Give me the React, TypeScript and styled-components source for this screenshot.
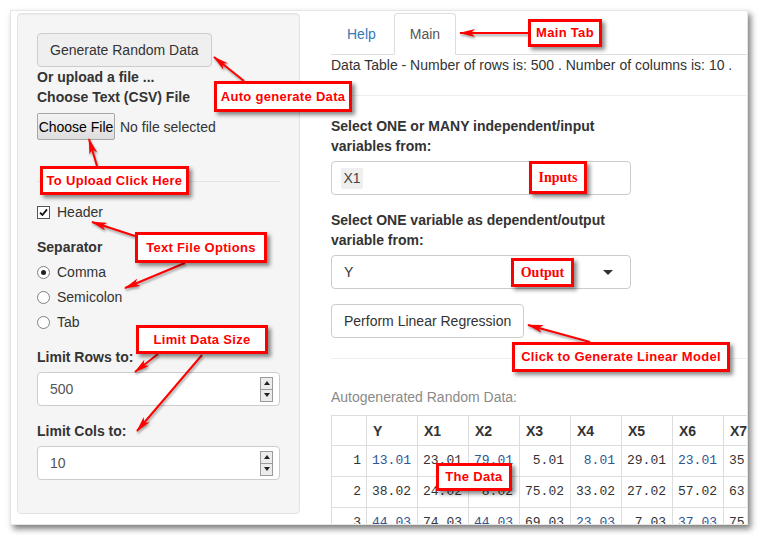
import React from "react";
import styled, { createGlobalStyle } from "styled-components";

const GlobalStyle = createGlobalStyle`
  * {
    box-sizing: border-box;
  }
  body {
    margin: 0;
    background: #ffffff;
    font-family: "Liberation Sans", Arial, Helvetica, sans-serif;
    font-size: 14px;
    line-height: 20px;
    color: #333333;
  }
`;

const Page = styled.div`
  position: relative;
  width: 759px;
  height: 535px;
  padding: 10px 0 0 10px;
  overflow: hidden;
`;

const Frame = styled.div`
  width: 738px;
  height: 515px;
  display: flex;
  background: #ffffff;
  border: 1px solid #e6e6e6;
  box-shadow: 3px 4px 6px rgba(0, 0, 0, 0.5);
  overflow: hidden;
`;

const Sidebar = styled.div`
  flex: none;
  padding: 2px 0 0 6px;
`;

const Well = styled.div`
  width: 283px;
  height: 501px;
  padding: 19px;
  background: #f5f5f5;
  border: 1px solid #e3e3e3;
  border-radius: 4px;
  box-shadow: inset 0 1px 1px rgba(0, 0, 0, 0.05);
`;

const Button = styled.button<{ $tone?: "grey" | "white" }>`
  display: block;
  height: 34px;
  padding: 6px 12px;
  font-family: inherit;
  font-size: 14px;
  line-height: 20px;
  color: #333333;
  background: ${(p) => (p.$tone === "white" ? "#ffffff" : "#efefef")};
  border: 1px solid #cccccc;
  border-radius: 4px;
  white-space: nowrap;
`;

const Label = styled.div<{ $mt?: number; $width?: number }>`
  margin-top: ${(p) => p.$mt ?? 0}px;
  max-width: ${(p) => (p.$width ? `${p.$width}px` : "none")};
  font-weight: bold;
  line-height: 20px;
`;

const FileRow = styled.div`
  display: flex;
  align-items: center;
  gap: 5px;
  height: 27px;
  margin-top: 6px;
`;

const FileButton = styled.button`
  width: 78px;
  height: 27px;
  padding: 0;
  font-family: inherit;
  font-size: 14px;
  color: #000000;
  background: linear-gradient(#f4f4f4, #dddddd);
  border: 1px solid #a6a6a6;
  border-radius: 2px;
  white-space: nowrap;
`;

const Rule = styled.hr<{ $mt: number; $tone?: string }>`
  height: 0;
  margin: ${(p) => p.$mt}px 0 0;
  border: 0;
  border-top: 1px solid ${(p) => p.$tone ?? "#e3e3e3"};
`;

const OptionRow = styled.div<{ $mt: number }>`
  display: flex;
  align-items: center;
  gap: 7px;
  height: 20px;
  margin-top: ${(p) => p.$mt}px;
`;

const CheckBox = styled.span`
  width: 13px;
  height: 13px;
  display: flex;
  align-items: center;
  justify-content: center;
  background: #ffffff;
  border: 1px solid #555555;
`;

const Radio = styled.span<{ $on?: boolean }>`
  width: 13px;
  height: 13px;
  display: flex;
  align-items: center;
  justify-content: center;
  background: #ffffff;
  border: 1px solid #808080;
  border-radius: 50%;

  &::after {
    content: "";
    width: 5px;
    height: 5px;
    border-radius: 50%;
    background: ${(p) => (p.$on ? "#222222" : "transparent")};
  }
`;

const NumberField = styled.div`
  height: 34px;
  margin-top: 5px;
  padding: 0 6px 0 12px;
  display: flex;
  align-items: center;
  justify-content: space-between;
  color: #555555;
  background: #ffffff;
  border: 1px solid #cccccc;
  border-radius: 4px;
`;

const Spinner = styled.div`
  display: flex;
  flex-direction: column;
  width: 13px;
`;

const Step = styled.span<{ $down?: boolean }>`
  height: 13px;
  display: flex;
  align-items: center;
  justify-content: center;
  background: #ececec;
  border: 1px solid #9a9a9a;
  margin-top: ${(p) => (p.$down ? "-1px" : "0")};

  &::after {
    content: "";
    border-left: 3px solid transparent;
    border-right: 3px solid transparent;
    ${(p) => (p.$down ? "border-top: 4px solid #222;" : "border-bottom: 4px solid #222;")}
  }
`;

const Main = styled.div`
  flex: 1;
  min-width: 0;
  margin-left: 31px;
  padding-top: 2px;
  overflow: hidden;
`;

const TabBar = styled.div`
  display: flex;
  border-bottom: 1px solid #dddddd;
`;

const Tab = styled.div<{ $active?: boolean }>`
  margin: 0 2px -1px 0;
  padding: 10px 15px;
  line-height: 20px;
  color: ${(p) => (p.$active ? "#555555" : "#337ab7")};
  background: ${(p) => (p.$active ? "#ffffff" : "transparent")};
  border: 1px solid ${(p) => (p.$active ? "#dddddd" : "transparent")};
  border-bottom-color: transparent;
  border-radius: 4px 4px 0 0;
`;

const Status = styled.div`
  line-height: 20px;
  white-space: nowrap;
`;

const Field = styled.div<{ $mt: number }>`
  width: 300px;
  height: 34px;
  margin-top: ${(p) => p.$mt}px;
  padding: 0 17px 0 9px;
  display: flex;
  align-items: center;
  justify-content: space-between;
  background: #ffffff;
  border: 1px solid #cccccc;
  border-radius: 4px;
`;

const Chip = styled.span`
  width: 22px;
  height: 21px;
  display: flex;
  align-items: center;
  justify-content: center;
  color: #444444;
  background: #efefef;
  border-radius: 2px;
`;

const SelectValue = styled.span`
  padding-left: 3px;
  color: #333333;
`;

const Caret = styled.span`
  border-left: 5px solid transparent;
  border-right: 5px solid transparent;
  border-top: 5px solid #333333;
`;

const Caption = styled.div`
  margin-top: 28px;
  line-height: 20px;
  color: #8a8a8a;
`;

const DataTable = styled.table`
  margin-top: 8px;
  border-collapse: collapse;
  table-layout: fixed;
  width: 443px;
`;

const Th = styled.th<{ $w: number }>`
  width: ${(p) => p.$w}px;
  height: 30px;
  padding: 0 6px;
  text-align: left;
  font-weight: bold;
  border: 1px solid #dddddd;
`;

const Td = styled.td<{ $blue?: boolean }>`
  height: 31px;
  padding: 0 6px 0 0;
  text-align: right;
  font-family: "Liberation Mono", "Courier New", monospace;
  font-size: 13px;
  color: ${(p) => (p.$blue ? "#2f5592" : "#333333")};
  border: 1px solid #dddddd;
  white-space: nowrap;
`;

const Note = styled.div<{ $x: number; $y: number; $w: number; $h: number; $serif?: boolean }>`
  position: absolute;
  left: ${(p) => p.$x}px;
  top: ${(p) => p.$y}px;
  width: ${(p) => p.$w}px;
  height: ${(p) => p.$h}px;
  display: flex;
  align-items: center;
  justify-content: center;
  font-family: ${(p) =>
    p.$serif ? `"Liberation Serif", "Times New Roman", serif` : `"Liberation Sans", Arial, sans-serif`};
  font-size: ${(p) => (p.$serif ? 14 : 13)}px;
  font-weight: bold;
  letter-spacing: ${(p) => (p.$serif ? 0 : 0.3)}px;
  color: #ff0000;
  background: #ffffff;
  border: 3px solid #ff0000;
  box-shadow: 3px 3px 4px rgba(0, 0, 0, 0.45);
  white-space: nowrap;
`;

const ArrowLayer = styled.svg`
  position: absolute;
  left: 0;
  top: 0;
  pointer-events: none;
  filter: drop-shadow(1px 2px 1px rgba(0, 0, 0, 0.35));
`;

const headers = ["Y", "X1", "X2", "X3", "X4", "X5", "X6", "X7"];

const rows = [
  ["13.01", "23.01", "79.01", "5.01", "8.01", "29.01", "23.01", "35.01"],
  ["38.02", "24.02", "8.02", "75.02", "33.02", "27.02", "57.02", "63.02"],
  ["44.03", "74.03", "44.03", "69.03", "23.03", "7.03", "37.03", "75.03"],
];

const notes = [
  { text: "Auto generate Data", x: 214, y: 81, w: 138, h: 31 },
  { text: "To Upload Click Here", x: 40, y: 166, w: 149, h: 29 },
  { text: "Text File Options", x: 135, y: 232, w: 132, h: 31 },
  { text: "Limit Data Size", x: 136, y: 325, w: 132, h: 29 },
  { text: "Main Tab", x: 528, y: 19, w: 74, h: 28 },
  { text: "Inputs", x: 529, y: 161, w: 58, h: 33, serif: true },
  { text: "Output", x: 511, y: 258, w: 63, h: 29, serif: true },
  { text: "Click to Generate Linear Model", x: 512, y: 342, w: 218, h: 30 },
  { text: "The Data", x: 436, y: 463, w: 76, h: 28 },
];

const arrows = [
  [244, 81, 214, 57],
  [97, 166, 89, 139],
  [135, 236, 92, 222],
  [185, 263, 125, 288],
  [158, 354, 135, 372],
  [202, 355, 137, 431],
  [528, 33, 460, 33],
  [590, 342, 528, 325],
];

const Check = () => (
  <svg width="9" height="9" viewBox="0 0 9 9">
    <path d="M1 4.6 L3.4 7 L8 1.4" fill="none" stroke="#111" strokeWidth="1.8" />
  </svg>
);

export default function App() {
  return (
    <>
      <GlobalStyle />
      <Page>
        <Frame>
          <Sidebar>
            <Well>
              <Button>Generate Random Data</Button>
              <Label>Or upload a file ...</Label>
              <Label>Choose Text (CSV) File</Label>
              <FileRow>
                <FileButton>Choose File</FileButton>
                <span>No file selected</span>
              </FileRow>
              <Rule $mt={41} />
              <OptionRow $mt={20}>
                <CheckBox>
                  <Check />
                </CheckBox>
                Header
              </OptionRow>
              <Label $mt={15}>Separator</Label>
              <OptionRow $mt={5}>
                <Radio $on />
                Comma
              </OptionRow>
              <OptionRow $mt={5}>
                <Radio />
                Semicolon
              </OptionRow>
              <OptionRow $mt={5}>
                <Radio />
                Tab
              </OptionRow>
              <Label $mt={15}>Limit Rows to:</Label>
              <NumberField>
                500
                <Spinner>
                  <Step />
                  <Step $down />
                </Spinner>
              </NumberField>
              <Label $mt={15}>Limit Cols to:</Label>
              <NumberField>
                10
                <Spinner>
                  <Step />
                  <Step $down />
                </Spinner>
              </NumberField>
            </Well>
          </Sidebar>

          <Main>
            <TabBar>
              <Tab>Help</Tab>
              <Tab $active>Main</Tab>
            </TabBar>
            <Status>Data Table - Number of rows is: 500 . Number of columns is: 10 .</Status>
            <Rule $mt={20} $tone="#eeeeee" />
            <Label $mt={20} $width={300}>
              Select ONE or MANY independent/input variables from:
            </Label>
            <Field $mt={5}>
              <Chip>X1</Chip>
            </Field>
            <Label $mt={15} $width={300}>
              Select ONE variable as dependent/output variable from:
            </Label>
            <Field $mt={5}>
              <SelectValue>Y</SelectValue>
              <Caret />
            </Field>
            <Button $tone="white" style={{ marginTop: 15 }}>
              Perform Linear Regression
            </Button>
            <Rule $mt={20} $tone="#eeeeee" />
            <Caption>Autogenerated Random Data:</Caption>
            <DataTable>
              <thead>
                <tr>
                  <Th $w={35} />
                  {headers.map((h) => (
                    <Th key={h} $w={51}>
                      {h}
                    </Th>
                  ))}
                </tr>
              </thead>
              <tbody>
                {rows.map((r, i) => (
                  <tr key={i}>
                    <Td style={{ paddingRight: 5 }}>{i + 1}</Td>
                    {r.map((v, j) => (
                      <Td key={j} $blue={i !== 1 && j % 2 === 0}>
                        {v}
                      </Td>
                    ))}
                  </tr>
                ))}
              </tbody>
            </DataTable>
          </Main>
        </Frame>

        <ArrowLayer width="759" height="535" viewBox="0 0 759 535">
          <defs>
            <marker
              id="head"
              markerUnits="userSpaceOnUse"
              markerWidth="16"
              markerHeight="8"
              refX="15"
              refY="4"
              orient="auto"
            >
              <path d="M0 0 L16 4 L0 8 L4 4 Z" fill="#ff0000" />
            </marker>
          </defs>
          {arrows.map(([x1, y1, x2, y2], i) => (
            <line
              key={i}
              x1={x1}
              y1={y1}
              x2={x2}
              y2={y2}
              stroke="#ff0000"
              strokeWidth="2"
              markerEnd="url(#head)"
            />
          ))}
        </ArrowLayer>

        {notes.map((n) => (
          <Note key={n.text} $x={n.x} $y={n.y} $w={n.w} $h={n.h} $serif={n.serif}>
            {n.text}
          </Note>
        ))}
      </Page>
    </>
  );
}
